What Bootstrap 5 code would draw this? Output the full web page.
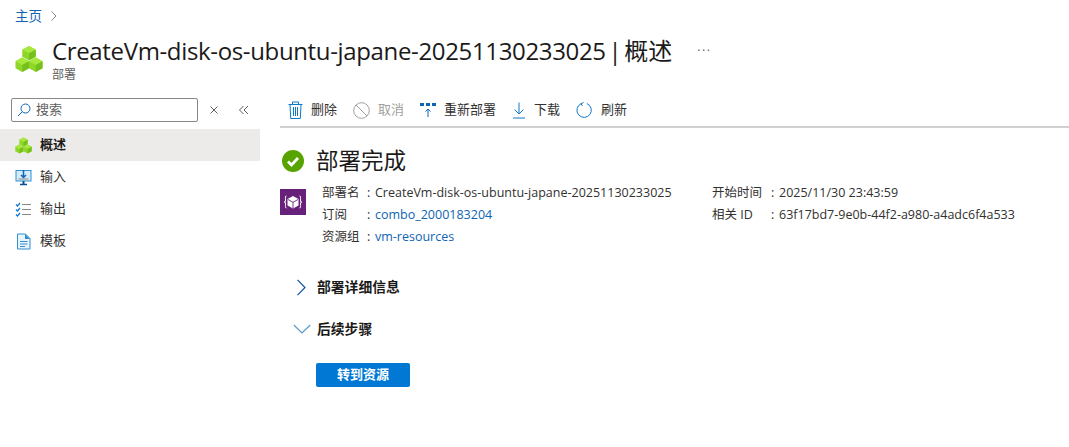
<!DOCTYPE html>
<html lang="zh-CN">
<head>
<meta charset="UTF-8">
<title>部署概述</title>
<link href="https://cdn.jsdelivr.net/npm/bootstrap@5.3.3/dist/css/bootstrap.min.css" rel="stylesheet">
<style>
body { font-family: "Open Sans", "Noto Sans CJK SC", sans-serif; font-size: 12.5px; color: #323130; background: #fff; overflow: hidden; }
a { color: #0f64b4; text-decoration: none; }
.crumb-row { height: 32px; padding-left: 15px; font-size: 13.5px; }
.head-row { height: 66px; padding-left: 15px; padding-top: 3px; }
.head-title { font-size: 24px; line-height: 32px; color: #1b1a19; font-weight: 500; margin: 0 0 0 1px; letter-spacing: -.35px; word-spacing: -3px; white-space: nowrap; }
.head-cn { letter-spacing: 0; font-weight: 400; }
.head-sub { font-size: 12px; color: #605e5c; line-height: 16px; margin-left: 1px; }
.head-more { margin-left: 25px; color: #605e5c; letter-spacing: 1.5px; }
.cube-big { margin-top: 10px; width: 28px; height: 28px; flex: none; }
.side-col { width: 260px; flex: none; }
.search-row { height: 31px; padding-left: 11px; }
.search-box { width: 187px; height: 24px; border: 1px solid #8a8886; border-radius: 2px; padding-left: 5px; font-size: 13px; color: #605e5c; gap: 5px; }
.search-clear { margin: 7px 0 0 11px; }
.search-fold { margin: 7px 0 0 20px; }
.side-item { height: 32px; padding-left: 15px; font-size: 13px; color: #323130; }
.side-item.is-on { background: #edebe9; font-weight: 700; color: #1b1a19; }
.main-col { margin-left: 20px; }
.tool-row { height: 30px; border-bottom: 2px solid #d2d0ce; padding: 0 0 4px 8px; }
.tool-btn { font-size: 13px; color: #323130; }
.tool-btn.is-off { color: #a19f9d; }
.done-row { margin-top: 21px; height: 24px; gap: 12px; padding-left: 2px; }
.done-title { font-size: 22.5px; line-height: 24px; color: #1b1a19; }
.info-wrap { margin-top: 9px; }
.purple-tile { width: 26px; height: 26px; background: #68217a; margin: 7px 16px 0 0; flex: none; }
.info-left { width: 390px; }
.info-row { line-height: 22px; white-space: nowrap; }
.key-a { display: inline-block; width: 45px; }
.key-b { display: inline-block; width: 59px; }
.info-colon { display: inline-block; width: 8px; }
.sect-row { height: 24px; }
.sect-one { margin-top: 27px; }
.sect-two { margin-top: 18px; }
.sect-ico { width: 37px; flex: none; padding-left: 13px; }
.sect-title { font-size: 13.8px; font-weight: 700; color: #1b1a19; }
.go-btn { display: block; width: 94px; height: 24px; margin: 22px 0 0 36px; padding: 0; background: #0078d4; border: 0; border-radius: 2px; font-size: 13px; font-weight: 700; color: #fff; }
</style>
</head>
<body>

<svg width="0" height="0" class="position-absolute">
  <symbol id="cubes" viewBox="0 0 29 29">
    <path d="M14.500 1 21.500 4.800v7.400L14.500 16 7.500 12.200V4.800z" fill="#8ed628"/><path d="M14.500 1 21.500 4.800 14.500 8.600 7.500 4.800z" fill="#a6e83c"/><path d="M14.500 8.600 21.500 4.800v7.400L14.500 16z" fill="#76c01c"/>
    <path d="M7.500 13 14.500 16.800v7.400L7.500 28 .5 24.200v-7.400z" fill="#8ed628"/><path d="M7.500 13 14.500 16.800 7.500 20.600.5 16.800z" fill="#a6e83c"/><path d="M7.500 20.600 14.500 16.800v7.400L7.500 28z" fill="#76c01c"/>
    <path d="M21.500 13 28.500 16.800v7.400L21.500 28 14.500 24.200v-7.400z" fill="#8ed628"/><path d="M21.500 13 28.500 16.800 21.500 20.600 14.500 16.800z" fill="#a6e83c"/><path d="M21.500 20.600 28.500 16.800v7.400L21.500 28z" fill="#76c01c"/>
  </symbol>
</svg>

<div class="crumb-row d-flex align-items-center gap-2">
  <a href="#">主页</a>
  <svg width="8" height="12" viewBox="0 0 8 12" fill="none" stroke="#8a8886"><path d="M1.500 1.500 6 6 1.500 10.500"/></svg>
</div>

<div class="head-row d-flex">
  <svg class="cube-big"><use href="#cubes"/></svg>
  <div class="ms-2">
    <div class="d-flex align-items-center">
      <h1 class="head-title">CreateVm-disk-os-ubuntu-japane-20251130233025 | <span class="head-cn">概述</span></h1>
      <span class="head-more">···</span>
    </div>
    <div class="head-sub">部署</div>
  </div>
</div>

<div class="d-flex">
  <div class="side-col">
    <div class="search-row d-flex align-items-start">
      <div class="search-box d-flex align-items-center">
        <svg width="14" height="14" viewBox="0 0 14 14" fill="none" stroke="#0f64b4"><circle cx="8.500" cy="5.500" r="4.500"/><path d="M5.200 8.800 1 13"/></svg>
        搜索
      </div>
      <svg class="search-clear" width="10" height="10" viewBox="0 0 10 10" fill="none" stroke="#605e5c"><path d="M1.500 1.500 8.500 8.500M8.500 1.500 1.500 8.500"/></svg>
      <svg class="search-fold" width="10" height="10" viewBox="0 0 10 10" fill="none" stroke="#605e5c"><path d="M4.500 1 .5 5l4 4M9 1 5 5l4 4"/></svg>
    </div>
    <div class="side-item is-on d-flex align-items-center gap-2">
      <svg width="17" height="17"><use href="#cubes"/></svg>
      概述
    </div>
    <div class="side-item d-flex align-items-center gap-2">
      <svg width="17" height="17" viewBox="0 0 17 17"><rect x="1" y="1.500" width="15" height="10.500" fill="#d4ebfa" stroke="#2f8fd0"/><path d="M5 15.500h7" stroke="#0a4f94" stroke-width="1.500"/><path d="M8.500 12v3" stroke="#0a4f94" stroke-width="2"/><path d="M8.500 1v7M6 6l2.500 2.500L11 6" fill="none" stroke="#0f64b4" stroke-width="1.500"/><path d="M3.500 10h10" stroke="#8a8886"/></svg>
      输入
    </div>
    <div class="side-item d-flex align-items-center gap-2">
      <svg width="17" height="17" viewBox="0 0 17 17" fill="none"><path d="M1 3.500 2.500 5 5 2M1 8.500 2.500 10 5 7M1 13.500 2.500 15 5 12" stroke="#0f78d4" stroke-width="1.300"/><path d="M7 3.500h9M7 8.500h9M7 13.500h9" stroke="#8a8886" stroke-width="1.200"/></svg>
      输出
    </div>
    <div class="side-item d-flex align-items-center gap-2">
      <svg width="17" height="17" viewBox="0 0 17 17" fill="none"><path d="M2.500 1h8L15 5.500V16H2.500z" fill="#eaf4fb" stroke="#2f8fd0"/><path d="M10 1V6h5z" fill="#2f8fd0"/><path d="M5 8.500h7.500M5 11h7.500M5 13.500h5" stroke="#2f8fd0"/></svg>
      模板
    </div>
  </div>

  <div class="main-col flex-grow-1">
    <div class="tool-row d-flex align-items-center gap-3">
      <span class="tool-btn d-flex align-items-center gap-2">
        <svg width="15" height="18" viewBox="0 0 15 18" fill="none" stroke="#0f78c8"><path d="M.5 3.500h14M4.500 3.500v-2.500h6v2.500M2 3.500l.7 14h9.600l.7-14M5.500 6v9M7.500 6v9M9.500 6v9"/></svg>
        删除
      </span>
      <span class="tool-btn is-off d-flex align-items-center gap-2">
        <svg width="17" height="17" viewBox="0 0 17 17" fill="none" stroke="#a19f9d"><circle cx="8.500" cy="8.500" r="7.800"/><path d="M3 3 14 14"/></svg>
        取消
      </span>
      <span class="tool-btn d-flex align-items-center gap-2">
        <svg width="16" height="16" viewBox="0 0 16 16"><path d="M0 1h4v3H0zM6 1h4v3H6zM12 1h4v3h-4z" fill="#0f64b4"/><path d="M8 15V7M5.500 9.500 8 7l2.500 2.500" fill="none" stroke="#0f64b4"/></svg>
        重新部署
      </span>
      <span class="tool-btn d-flex align-items-center gap-2">
        <svg width="14" height="17" viewBox="0 0 14 17" fill="none" stroke="#0f78c8"><path d="M7 .5v11.500M2.500 7.500 7 12l4.500-4.500M1 16h12"/></svg>
        下载
      </span>
      <span class="tool-btn d-flex align-items-center gap-2">
        <svg width="17" height="17" viewBox="0 0 17 17" fill="none" stroke="#0f78c8"><path d="M10.800 1.500a7.200 7.200 0 1 1-5.800.2M5 1.700 7.500.5M5 1.700 6.500 4"/></svg>
        刷新
      </span>
    </div>

    <div class="done-row d-flex align-items-center">
      <svg width="22" height="22" viewBox="0 0 22 22"><circle cx="11" cy="11" r="11" fill="#57a300"/><path d="M6 11.500 9.500 15 16 8" fill="none" stroke="#fff" stroke-width="2.800"/></svg>
      <span class="done-title">部署完成</span>
    </div>

    <div class="info-wrap d-flex">
      <div class="purple-tile d-flex align-items-center justify-content-center">
        <svg width="20" height="16" viewBox="0 0 20 16">
          <path d="M3.500 2C2 2 2.500 3.500 2.500 6S2 8 1 8c1 0 1.500 0 1.500 2s-.5 4 1 4M16.500 2c1.500 0 1 1.500 1 4s.5 2 1.500 2c-1 0-1.500 0-1.500 2s.5 4-1 4" fill="none" stroke="#fff"/>
          <path d="M10 2 15.500 5v6.500L10 14.500 4.500 11.500V5z" fill="#fff"/><path d="M5 5.500 10 8.300 15 5.500M10 8.300V14" fill="none" stroke="#68217a" stroke-width=".9"/>
        </svg>
      </div>
      <div class="info-left">
        <div class="info-row"><span class="key-a">部署名</span><span class="info-colon">:</span>CreateVm-disk-os-ubuntu-japane-20251130233025</div>
        <div class="info-row"><span class="key-a">订阅</span><span class="info-colon">:</span><a href="#">combo_2000183204</a></div>
        <div class="info-row"><span class="key-a">资源组</span><span class="info-colon">:</span><a href="#">vm-resources</a></div>
      </div>
      <div>
        <div class="info-row"><span class="key-b">开始时间</span><span class="info-colon">:</span>2025/11/30 23:43:59</div>
        <div class="info-row"><span class="key-b">相关 ID</span><span class="info-colon">:</span>63f17bd7-9e0b-44f2-a980-a4adc6f4a533</div>
      </div>
    </div>

    <div class="sect-row sect-one d-flex align-items-center">
      <div class="sect-ico d-flex"><svg width="18" height="17" viewBox="0 0 18 17" fill="none" stroke="#0f4fa8" stroke-width="1.200"><path d="M4.500 .8 12 8.500 4.500 16.200"/></svg></div>
      <span class="sect-title">部署详细信息</span>
    </div>
    <div class="sect-row sect-two d-flex align-items-center">
      <div class="sect-ico d-flex"><svg width="18" height="10" viewBox="0 0 18 10" fill="none" stroke="#5a9ac8" stroke-width="1.200"><path d="M.8 1 9 9l8.200-8"/></svg></div>
      <span class="sect-title">后续步骤</span>
    </div>
    <button type="button" class="btn go-btn">转到资源</button>
  </div>
</div>

</body>
</html>
